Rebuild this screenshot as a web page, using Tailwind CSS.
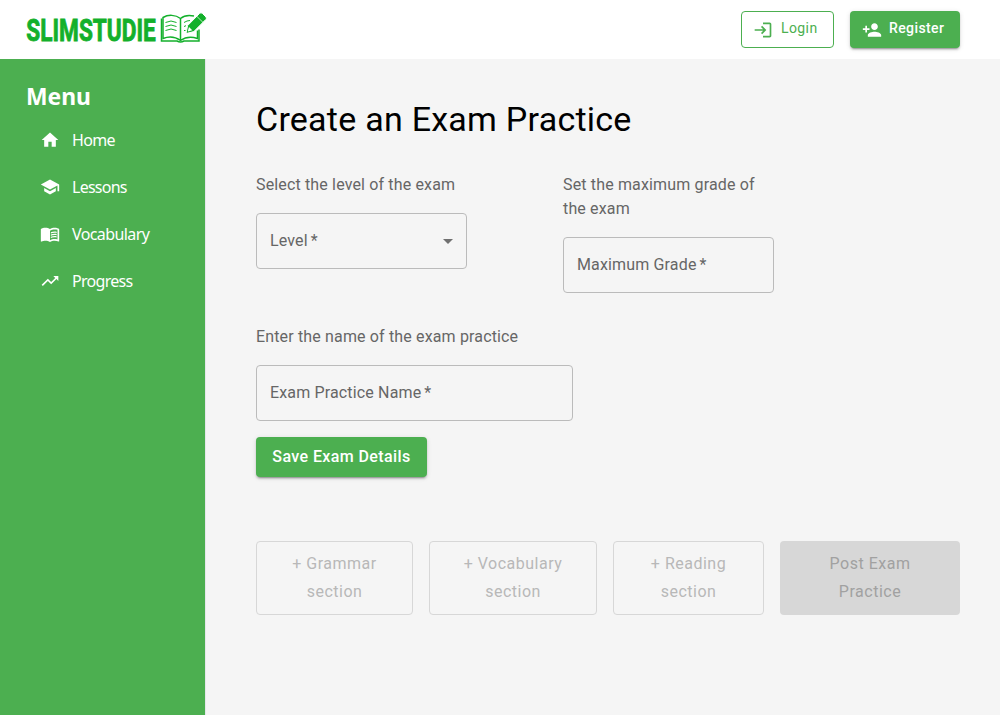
<!DOCTYPE html>
<html lang="en">
<head>
<meta charset="utf-8">
<title>SlimStudie</title>
<script src="https://cdn.jsdelivr.net/npm/@tailwindcss/browser@4"></script>
</head>
<body class="flex h-screen flex-col overflow-hidden bg-[#f5f5f5] font-[Roboto,sans-serif] text-base text-[#666666]">
<header class="flex h-[59px] shrink-0 items-start justify-between bg-white pl-[25px] pr-10 pt-[11px]">
  <svg class="h-[36px] w-[184px] overflow-visible" viewBox="0 0 184 36" fill="#13b02b">
    <text x="1.300" y="30" font-family="Roboto, sans-serif" font-weight="700" font-size="32" textLength="129.500" lengthAdjust="spacingAndGlyphs" stroke="#13b02b" stroke-width=".9">SLIMSTUDIE</text>
    <g fill="none" stroke="#13b02b">
      <path stroke-width="1.500" d="M155.500 7.500C150.500 3.500 143 3.500 138 6.500V27.500C143 25.500 150 25.500 155.500 29.500C161 25.500 167 25.500 172.500 27.500V19.500M155.500 7.500C159 4.500 164.500 4 169 5M155.500 7.500V30"/>
      <path stroke-width="1.500" d="M136.500 7.500V30H152Q155.500 32 159 30H174V18.500"/>
      <path stroke-width="1" d="M140.500 11.500Q146 8.500 151.500 11.500M140.500 15.500Q146 12.500 151.500 15.500M140.500 19.500Q146 16.500 151.500 19.500M159 11.500Q162 9.500 165 9.500M159 15.500L161 14.700M159 19.500H160.500"/>
    </g>
    <path stroke="#fff" stroke-width="1" d="M161 22.600L162.600 14.600L174.700 2.300Q176 1.200 177.300 2.300L181 6Q182 7.200 180.900 8.400L168.800 20.600Z"/>
    <path fill="#fff" d="M164 16L167.300 19.300L163.200 20.600L162.800 20.200Z"/>
    <path fill="none" stroke="#fff" stroke-width=".7" d="M171.800 5.300L177.900 11.300"/>
  </svg>
  <div class="flex gap-4 text-sm font-medium tracking-[0.4px]">
    <button class="flex h-[37px] w-[93px] rounded border border-[#4caf50] pl-[11px] pt-[7px] text-[#4caf50]">
      <svg class="mt-[1px] size-5" viewBox="0 0 24 24" fill="currentColor"><path d="M11 7 9.600 8.400l2.600 2.600H2v2h10.200l-2.600 2.600L11 17l5-5-5-5zm9 12h-8v2h8c1.100 0 2-.9 2-2V5c0-1.100-.9-2-2-2h-8v2h8v14z"/></svg>
      <span class="ml-2 -mt-[1px] font-normal">Login</span>
    </button>
    <button class="flex h-[37px] w-[110px] rounded bg-[#4caf50] pl-3 pt-2 text-white shadow-[0_3px_1px_-2px_rgba(0,0,0,0.2),0_2px_2px_0_rgba(0,0,0,0.14),0_1px_5px_0_rgba(0,0,0,0.12)]">
      <svg class="mt-[1px] size-5" viewBox="0 0 24 24" fill="currentColor"><path d="M15 12c2.210 0 4-1.790 4-4s-1.790-4-4-4-4 1.790-4 4 1.790 4 4 4zm-9-2V7H4v3H1v2h3v3h2v-3h3v-2H6zm9 4c-2.670 0-8 1.340-8 4v2h16v-2c0-2.660-5.330-4-8-4z"/></svg>
      <span class="ml-[7px] -mt-[1px]">Register</span>
    </button>
  </div>
</header>
<div class="flex min-h-0 flex-1">
  <aside class="w-[206px] shrink-0 border-r border-[#e5e7eb] bg-[#4caf50] pl-[27px] pt-[22px] font-['Noto_Sans','Open_Sans',sans-serif] text-white">
    <h2 class="h-8 text-2xl font-bold leading-8"><svg class="h-8 w-20 overflow-visible" fill="currentColor"><text x="-1" y="24" textLength="65" lengthAdjust="spacingAndGlyphs">Menu</text></svg></h2>
    <nav class="mt-[4px] pl-[13px]">
      <a class="flex h-[47px] items-center gap-3"><svg class="-mt-[2px] size-5" viewBox="0 0 24 24" fill="currentColor"><path d="M10 20v-6h4v6h5v-8h3L12 3 2 12h3v8z"/></svg><span class="-mt-[2px] tracking-[-0.7px]">Home</span></a>
      <a class="flex h-[47px] items-center gap-3"><svg class="-mt-[2px] size-5" viewBox="0 0 24 24" fill="currentColor"><path d="M5 13.180v4L12 21l7-3.820v-4L12 17l-7-3.820zM12 3 1 9l11 6 9-4.910V17h2V9L12 3z"/></svg><span class="-mt-[2px] tracking-[-0.75px]">Lessons</span></a>
      <a class="flex h-[47px] items-center gap-3"><svg class="-mt-[2px] size-5" viewBox="0 0 24 24" fill="currentColor"><path d="M21 5c-1.110-.35-2.330-.5-3.500-.5-1.950 0-4.050.4-5.500 1.500-1.450-1.100-3.550-1.500-5.500-1.500S2.450 4.900 1 6v14.650c0 .25.25.5.5.5.1 0 .15-.05.25-.05C3.100 20.450 5.050 20 6.500 20c1.950 0 4.050.4 5.500 1.500 1.350-.85 3.800-1.500 5.500-1.500 1.650 0 3.350.3 4.750 1.050.1.050.15.050.25.050.25 0 .5-.25.5-.5V6c-.6-.45-1.250-.75-2-1zm0 13.500c-1.100-.35-2.300-.5-3.500-.5-1.700 0-4.150.65-5.500 1.500V8c1.350-.85 3.800-1.500 5.500-1.500 1.200 0 2.400.15 3.500.5v11.500z"/><path d="M17.500 10.500c.88 0 1.730.09 2.500.26V9.240c-.79-.15-1.640-.24-2.500-.24-1.700 0-3.240.29-4.500.83v1.660c1.130-.64 2.700-.99 4.500-.99zM13 12.490v1.660c1.130-.64 2.700-.99 4.500-.99.88 0 1.730.09 2.500.26V11.900c-.79-.15-1.640-.24-2.500-.24-1.700 0-3.240.3-4.500.83zm4.500 1.840c-1.700 0-3.240.29-4.500.83v1.660c1.130-.64 2.700-.99 4.500-.99.88 0 1.730.09 2.500.26v-1.520c-.79-.16-1.640-.24-2.500-.24z"/></svg><span class="-mt-[2px] tracking-[-0.6px]">Vocabulary</span></a>
      <a class="flex h-[47px] items-center gap-3"><svg class="-mt-[2px] size-5" viewBox="0 0 24 24" fill="currentColor"><path d="m16 6 2.290 2.290-4.880 4.880-4-4L2 16.590 3.410 18l6-6 4 4 6.300-6.290L22 12V6z"/></svg><span class="-mt-[2px] tracking-[-0.7px]">Progress</span></a>
    </nav>
  </aside>
  <main class="flex-1 pl-[50px] pr-10 pt-[39px] leading-6 tracking-[0.15px]">
    <h1 class="mb-[33px] h-[42px] text-[34px] leading-[42px] tracking-[0.25px] text-black">Create an Exam Practice</h1>
    <div class="flex gap-24">
      <div class="w-[211px]">
        <p class="mb-4 h-6">Select the level of the exam</p>
        <div class="flex h-14 items-center justify-between rounded border border-[#bbbbbb] px-[13px]"><span>Level<span class="ml-[3px]">*</span></span><span class="mt-[1px] border-x-5 border-t-5 border-x-transparent border-t-[#707070]"></span></div>
      </div>
      <div class="w-[211px]">
        <p class="mb-4 h-12">Set the maximum grade of the exam</p>
        <div class="flex h-14 items-center rounded border border-[#bbbbbb] pl-[13px]"><span>Maximum Grade<span class="ml-[3px]">*</span></span></div>
      </div>
    </div>
    <p class="mb-4 mt-8 h-6">Enter the name of the exam practice</p>
    <div class="flex h-14 w-[317px] items-center rounded border border-[#bbbbbb] pl-[13px]"><span>Exam Practice Name<span class="ml-[3px]">*</span></span></div>
    <button class="mt-4 flex h-10 w-[171px] items-center justify-center rounded bg-[#4caf50] font-medium tracking-[0.4px] text-white shadow-[0_3px_1px_-2px_rgba(0,0,0,0.2),0_2px_2px_0_rgba(0,0,0,0.14),0_1px_5px_0_rgba(0,0,0,0.12)]">Save Exam Details</button>
    <div class="mt-16 flex gap-4 text-center leading-7 tracking-[0.5px] text-[#b8b8b8]">
      <button class="h-[74px] w-[157px] rounded border border-[#d7d7d7]">+ Grammar<br>section</button>
      <button class="h-[74px] w-[168px] rounded border border-[#d7d7d7]">+ Vocabulary<br>section</button>
      <button class="h-[74px] w-[151px] rounded border border-[#d7d7d7]">+ Reading<br>section</button>
      <button class="h-[74px] w-[180px] rounded bg-[#d7d7d7] text-[#a1a1a1]">Post Exam<br>Practice</button>
    </div>
  </main>
</div>
</body>
</html>
